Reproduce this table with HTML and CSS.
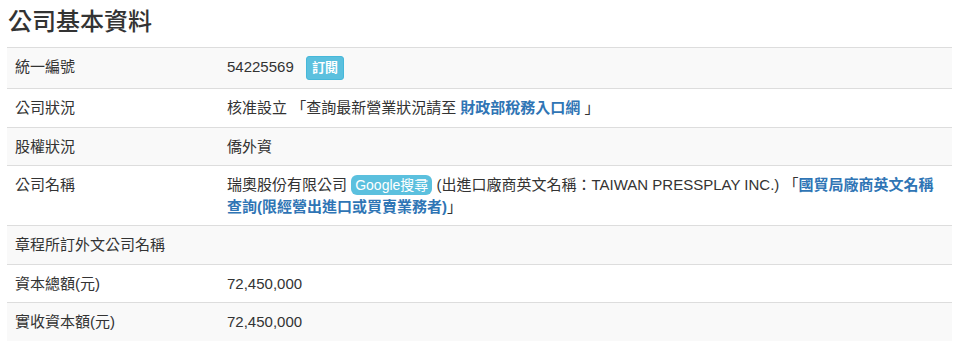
FILE: index.html
```html
<!DOCTYPE html>
<html lang="zh-Hant">
<head>
<meta charset="utf-8">
<title>公司基本資料</title>
<link rel="stylesheet" href="styles.css">
</head>
<body>
<div class="wrap">
  <h3 class="title">公司基本資料</h3>
  <table class="info">
    <tbody>
      <tr>
        <td class="key">統一編號</td>
        <td>54225569 <span class="btn-sub">訂閱</span></td>
      </tr>
      <tr>
        <td class="key">公司狀況</td>
        <td>核准設立 「查詢最新營業狀況請至 <a href="#" class="lnk">財政部稅務入口網</a> 」</td>
      </tr>
      <tr>
        <td class="key">股權狀況</td>
        <td>僑外資</td>
      </tr>
      <tr>
        <td class="key">公司名稱</td>
        <td>瑞奧股份有限公司 <span class="tag-google">Google搜尋</span> (出進口廠商英文名稱：TAIWAN PRESSPLAY INC.) 「<a href="#" class="lnk">國貿局廠商英文名稱查詢(限經營出進口或買賣業務者)</a>」</td>
      </tr>
      <tr>
        <td class="key">章程所訂外文公司名稱</td>
        <td></td>
      </tr>
      <tr>
        <td class="key">資本總額(元)</td>
        <td>72,450,000</td>
      </tr>
      <tr>
        <td class="key">實收資本額(元)</td>
        <td>72,450,000</td>
      </tr>
    </tbody>
  </table>
</div>
</body>
</html>
```

FILE: styles.css
```css
html, body {
  margin: 0;
  padding: 0;
  background: #fff;
}
body {
  font-family: "Liberation Sans", "Noto Sans CJK TC", sans-serif;
  font-size: 15px;
  line-height: 21.5px;
  color: #333;
}
.wrap {
  margin: 0 5px 0 7px;
}
.title {
  font-size: 24px;
  font-weight: 500;
  line-height: 26px;
  margin: 9px 0 12px 1px;
  color: #333;
}
.info {
  width: 100%;
  border-collapse: collapse;
  border-spacing: 0;
  border-bottom: 1px solid #ddd;
}
.info td {
  padding: 8px;
  border-top: 1px solid #ddd;
  vertical-align: top;
  text-align: left;
}
.info tr:nth-child(odd) td {
  background: #f9f9f9;
}
.info td.key {
  width: 196px;
}
.lnk {
  color: #2f75b5;
  font-weight: bold;
  text-decoration: none;
}
.btn-sub {
  display: inline-block;
  vertical-align: middle;
  margin-left: 8px;
  padding: 1px 5px;
  font-size: 13px;
  line-height: 20px;
  font-weight: bold;
  color: #fff;
  background: #5bc0de;
  border: 1px solid #46b8da;
  border-radius: 3px;
}
.tag-google {
  display: inline-block;
  padding: 1px 4px;
  font-size: 14px;
  line-height: 18px;
  color: #fff;
  background: #5bc0de;
  border-radius: 6px;
}
```
